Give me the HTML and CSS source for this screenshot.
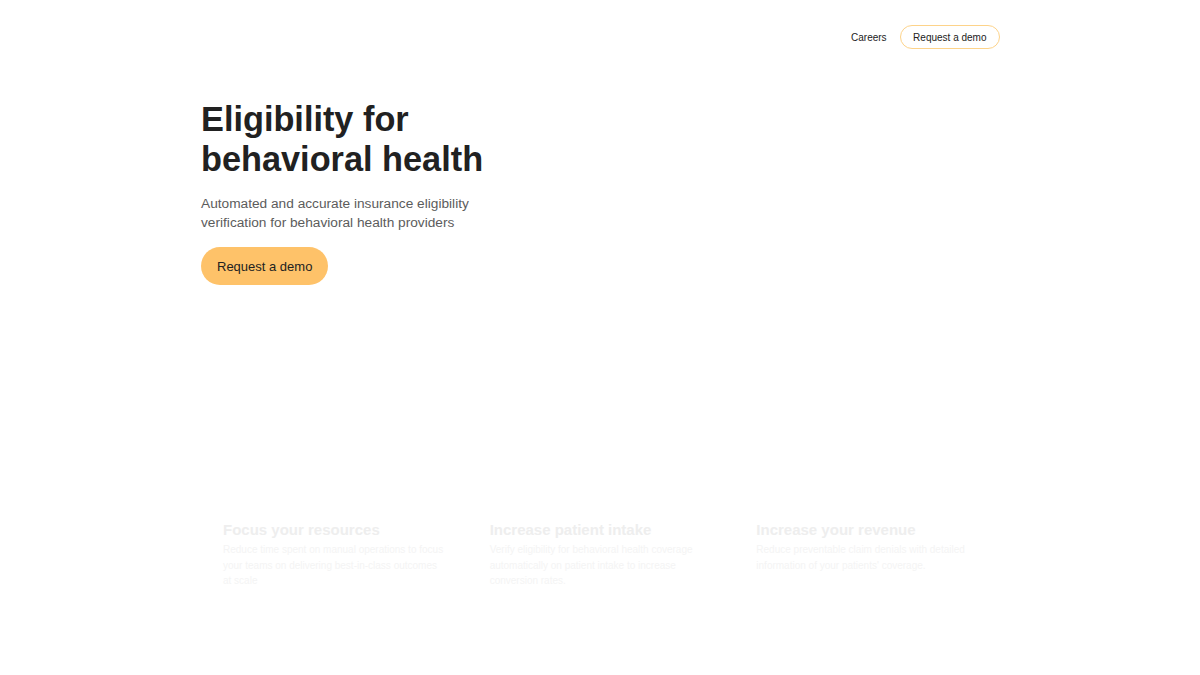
FILE: index.html
```html
<!DOCTYPE html>
<html lang="en">
<head>
<meta charset="utf-8">
<title>Eligibility for behavioral health</title>
<link rel="stylesheet" href="styles.css">
</head>
<body>
<div class="page">
  <header class="nav">
    <a class="nav-link" href="#">Careers</a>
    <a class="nav-btn" href="#">Request a demo</a>
  </header>
  <section class="hero">
    <h1 class="hero-title">Eligibility for<br>behavioral health</h1>
    <p class="hero-sub">Automated and accurate insurance eligibility<br>verification for behavioral health providers</p>
    <a class="hero-btn" href="#">Request a demo</a>
  </section>
  <section class="features">
    <div class="feature">
      <h3 class="feature-title">Focus your resources</h3>
      <p class="feature-text">Reduce time spent on manual operations to focus your teams on delivering best-in-class outcomes at scale</p>
    </div>
    <div class="feature">
      <h3 class="feature-title">Increase patient intake</h3>
      <p class="feature-text">Verify eligibility for behavioral health coverage automatically on patient intake to increase conversion rates.</p>
    </div>
    <div class="feature">
      <h3 class="feature-title">Increase your revenue</h3>
      <p class="feature-text">Reduce preventable claim denials with detailed information of your patients' coverage.</p>
    </div>
  </section>
</div>
</body>
</html>
```

FILE: styles.css
```css
* { box-sizing: border-box; }
html, body { margin: 0; padding: 0; background: #ffffff; }
body {
  font-family: "Liberation Sans", Arial, Helvetica, sans-serif;
  color: #222222;
}
a { text-decoration: none; color: inherit; }
.page {
  width: 800px;
  margin: 0 auto;
}
.nav {
  display: flex;
  justify-content: flex-end;
  align-items: center;
  gap: 13px;
  padding-top: 25px;
  height: 49px;
}
.nav-link {
  font-size: 10px;
  color: #222;
}
.nav-btn {
  display: inline-flex;
  align-items: center;
  height: 24px;
  padding: 0 12.5px;
  border: 1.5px solid #fdd38a;
  border-radius: 12px;
  font-size: 10px;
  color: #222;
}
.hero {
  padding-top: 50px;
  padding-left: 1px;
}
.hero-title {
  margin: 0;
  font-size: 34.3px;
  line-height: 40px;
  font-weight: 700;
  color: #212121;
}
.hero-sub {
  margin: 15px 0 0;
  font-size: 13.7px;
  line-height: 19px;
  color: #5c5c5c;
}
.hero-btn {
  display: inline-flex;
  align-items: center;
  height: 38px;
  margin-top: 15px;
  padding: 0 16px;
  border-radius: 19px;
  background: #fec269;
  font-size: 13px;
  color: #222;
}
.features {
  display: grid;
  grid-template-columns: repeat(3, 1fr);
  margin-top: 236px;
}
.feature {
  padding: 0 23px;
}
.feature-title {
  margin: 0;
  font-size: 15px;
  line-height: 18px;
  font-weight: 700;
  color: #eeeeee;
}
.feature-text {
  margin: 3px 0 0;
  font-size: 10px;
  line-height: 15.5px;
  color: #f4f4f4;
}
```
